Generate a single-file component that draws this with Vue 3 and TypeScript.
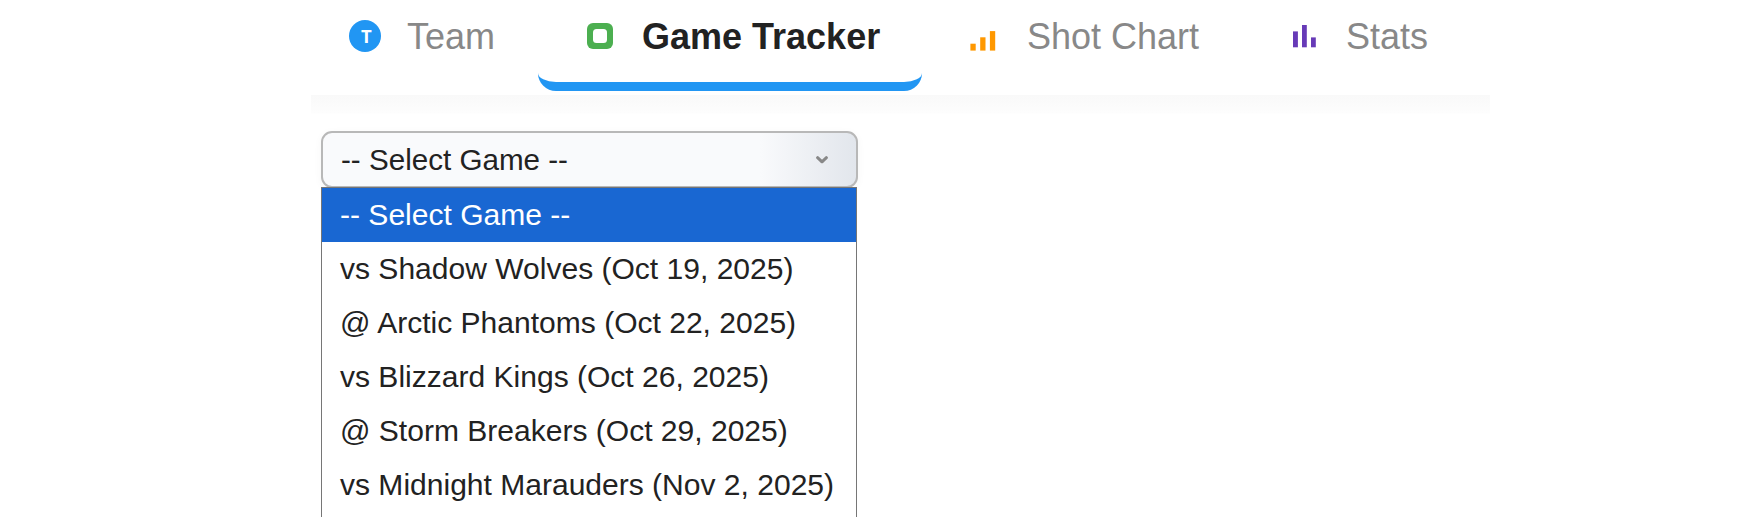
<script setup lang="ts">
interface Tab {
  id: string
  label: string
  active?: boolean
}

const tabs: Tab[] = [
  { id: 'team', label: 'Team' },
  { id: 'tracker', label: 'Game Tracker', active: true },
  { id: 'shots', label: 'Shot Chart' },
  { id: 'stats', label: 'Stats' },
]

const games: string[] = [
  '-- Select Game --',
  'vs Shadow Wolves (Oct 19, 2025)',
  '@ Arctic Phantoms (Oct 22, 2025)',
  'vs Blizzard Kings (Oct 26, 2025)',
  '@ Storm Breakers (Oct 29, 2025)',
  'vs Midnight Marauders (Nov 2, 2025)',
]
</script>

<template>
  <div class="page">
    <nav class="tabs">
      <div v-for="tab in tabs" :key="tab.id" class="tab" :class="[tab.id, { active: tab.active }]">
        <svg v-if="tab.id === 'team'" class="icon" viewBox="0 0 32 32">
          <circle cx="16" cy="16" r="16" fill="#2196f3" />
          <text x="17.3" y="23" text-anchor="middle" class="badge">T</text>
        </svg>
        <svg v-else-if="tab.id === 'tracker'" class="icon" viewBox="0 0 32 32">
          <rect x="3" y="3" width="26" height="26" rx="6" fill="#4caf50" />
          <rect x="9" y="9" width="14" height="14" rx="3.5" fill="#fff" />
        </svg>
        <svg v-else-if="tab.id === 'shots'" class="icon" viewBox="0 0 32 32" fill="#ff9800">
          <rect x="2.4" y="23.7" width="5.3" height="6.9" />
          <rect x="12.2" y="17.3" width="5.3" height="13.3" />
          <rect x="21.9" y="11.1" width="5.3" height="19.5" />
        </svg>
        <svg v-else class="icon" viewBox="0 0 32 32" fill="#673ab7">
          <rect x="5" y="11.4" width="4.9" height="15.9" />
          <rect x="14" y="5" width="4.8" height="22.3" />
          <rect x="23" y="17.4" width="4.8" height="9.9" />
        </svg>
        <span class="label">{{ tab.label }}</span>
      </div>
    </nav>
    <main class="content">
      <div class="select">
        <span>-- Select Game --</span>
        <svg class="chevron" viewBox="0 0 12 8">
          <path d="M1.6 1.7 6 5.8l4.4-4.1" />
        </svg>
      </div>
      <ul class="options">
        <li v-for="(game, i) in games" :key="game" :class="{ selected: i === 0 }">{{ game }}</li>
      </ul>
    </main>
  </div>
</template>

<style>
body {
  margin: 0;
  background: #fff;
}
</style>

<style scoped>
.page {
  box-sizing: border-box;
  height: 517px;
  overflow: hidden;
  background: #fff;
  font-family: "Liberation Sans", Arial, sans-serif;
  color: #222;
}
.tabs {
  display: grid;
  grid-template-columns: 235px 384px 320px 248px;
  height: 95px;
  padding-left: 303px;
}
.tab {
  box-sizing: border-box;
  display: flex;
  align-items: flex-start;
  gap: 26px;
  height: 91px;
  padding: 17px 0 0 46px;
  border-radius: 0 0 18px 18px;
  color: #888;
  font-size: 36px;
  white-space: nowrap;
}
.tab.shots {
  gap: 27px;
}
.tab.active {
  border-bottom: 9px solid #2196f3;
  color: #222;
  font-weight: 700;
}
.icon {
  flex: none;
  width: 32px;
  height: 32px;
  margin-top: 3px;
}
.badge {
  fill: #fff;
  font-family: "Open Sans", sans-serif;
  font-size: 18.5px;
  font-weight: 700;
}
.label {
  line-height: 40px;
}
.content {
  width: 1179px;
  margin-left: 311px;
  background: linear-gradient(#f9f9f9, #fdfdfd 18px, #fff 19px);
  padding: 36px 0 0 10px;
  box-sizing: border-box;
}
.select {
  box-sizing: border-box;
  display: flex;
  align-items: center;
  justify-content: space-between;
  width: 537px;
  height: 57px;
  padding: 0 28px 0 18px;
  border: 2px solid #b8b8b8;
  border-radius: 11px;
  background: linear-gradient(90deg, #f9fafc 82%, #e2e6ec);
  box-shadow: 0 2px 8px rgba(0, 0, 0, 0.04);
  font-size: 29.6px;
}
.chevron {
  width: 12px;
  height: 8px;
  fill: none;
  stroke: #888;
  stroke-width: 3;
  stroke-linecap: round;
  stroke-linejoin: round;
}
.options {
  position: relative;
  box-sizing: border-box;
  width: 536px;
  height: 340px;
  margin: -1px 0 0;
  padding: 0;
  border: 1px solid #767676;
  background: #fff;
  list-style: none;
  font-size: 30.04px;
}
.options li {
  height: 54px;
  padding-left: 18px;
  line-height: 54px;
  white-space: nowrap;
}
.options .selected {
  background: #1967d2;
  color: #fff;
}
</style>
